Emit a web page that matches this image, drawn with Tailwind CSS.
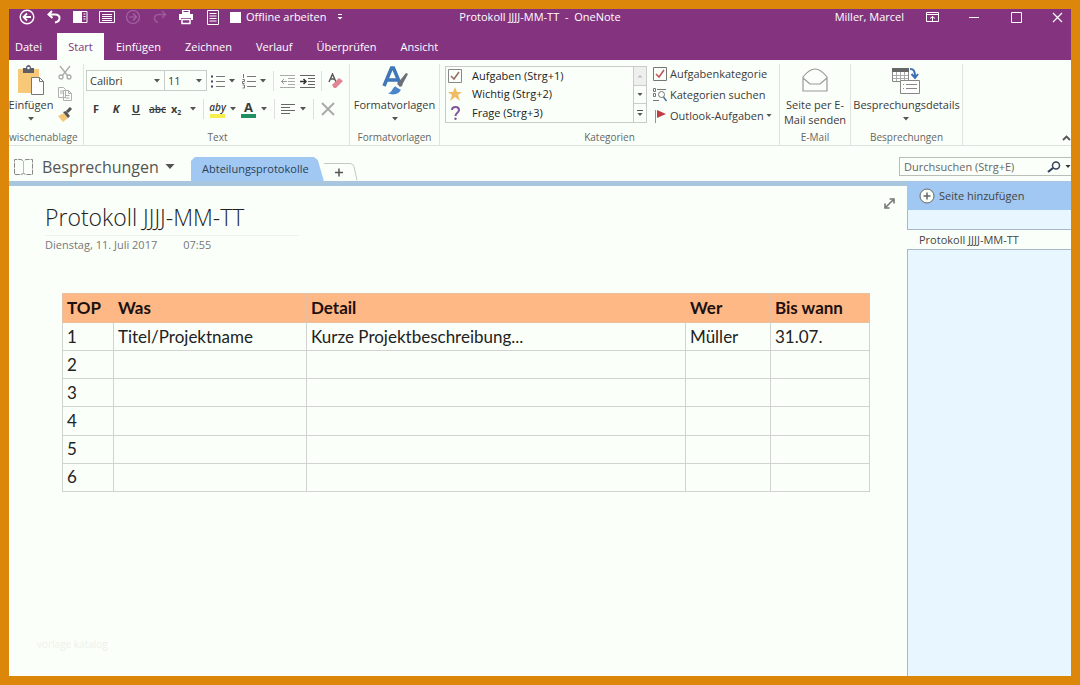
<!DOCTYPE html>
<html lang="de">
<head>
<meta charset="utf-8">
<meta name="viewport" content="width=device-width, initial-scale=1">
<title>Protokoll JJJJ-MM-TT - OneNote</title>
<script src="https://cdn.jsdelivr.net/npm/@tailwindcss/browser@4"></script>
</head>
<body class="flex min-h-screen flex-col border-9 border-[#dc860a] bg-[#fbfff9] font-['Open_Sans','Noto_Sans',sans-serif] text-[11px] leading-4 text-[#444]">

<header class="bg-[#84347f] text-white">
  <div class="grid h-4 grid-cols-[1fr_auto_1fr] items-center">
    <div class="flex h-4 items-center">
      <div class="ml-[5px] flex w-[212px]">
        <button aria-label="Zurück" class="flex flex-1 justify-center"><svg class="size-4" viewBox="0 0 16 16" fill="none" stroke="currentColor" stroke-width="1.4"><circle cx="8" cy="8" r="6.8"/><path d="M12 8H5M8 4.500 4.500 8 8 11.500" stroke-width="1.800"/></svg></button>
        <button aria-label="Rückgängig" class="flex flex-1 justify-center"><svg class="size-4" viewBox="0 0 16 16" fill="none" stroke="currentColor" stroke-width="2"><path d="M6 2 2.500 5.500 6.500 9M3 5.500h6c3 0 4.500 1.500 4.500 3.500S12 13 9 13.500"/></svg></button>
        <button aria-label="Seite andocken" class="flex flex-1 justify-center"><svg class="size-4" viewBox="0 0 16 16"><path d="M1 2h9v12H1z" fill="currentColor"/><path d="M10 2.500h5v11h-5M11.500 5h2M11.500 7.500h2M11.500 10h2" fill="none" stroke="currentColor"/></svg></button>
        <button aria-label="Ganzseitenansicht" class="flex flex-1 justify-center"><svg class="size-4" viewBox="0 0 16 16" fill="none" stroke="currentColor"><path d="M.500 2.500h15v11H.500zM3 5.500h10M3 7.500h10M3 9.500h10M3 11.500h10"/></svg></button>
        <button aria-label="Vorwärts" disabled class="flex flex-1 justify-center text-[#a565a1]"><svg class="size-4" viewBox="0 0 16 16" fill="none" stroke="currentColor" stroke-width="1.200"><circle cx="8" cy="8" r="6.500"/><path d="M4 8h7M8 4.500 11.500 8 8 11.500"/></svg></button>
        <button aria-label="Wiederholen" disabled class="flex flex-1 justify-center text-[#9b5897]"><svg class="size-4" viewBox="0 0 16 16" fill="none" stroke="currentColor" stroke-width="1.600"><path d="M10 2l3.500 3.500L10 9M13 5.500H7c-3 0-4.500 1.500-4.500 3.500S4 13 6 13.500"/></svg></button>
        <button aria-label="Drucken" class="flex flex-1 justify-center"><svg class="size-4" viewBox="0 0 16 16"><path d="M4 1h8v4H4zM1 5h14v6h-2V9H3v2H1z" fill="currentColor"/><path d="M4 10.500h8v4H4z" fill="none" stroke="currentColor" stroke-width="1.500"/><path d="M5.500 2.500h5" stroke="#84347f"/></svg></button>
        <button aria-label="Seitenvorlagen" class="flex flex-1 justify-center"><svg class="size-4" viewBox="0 0 16 16" fill="none" stroke="currentColor"><path d="M2.500 1.500h11v14h-11zM4.500 4.500h7M4.500 7h7M4.500 9.500h7M4.500 12h7"/></svg></button>
      </div>
      <button class="ml-1 flex items-center gap-[5px] whitespace-nowrap"><span class="size-[11px] bg-white"></span>Offline arbeiten</button>
      <button aria-label="Symbolleiste anpassen" class="ml-[10px]"><svg class="size-2" viewBox="0 0 8 8" fill="currentColor"><path d="M2 1h4v1H2zM1.500 4h5L4 6.500z"/></svg></button>
    </div>
    <h1 class="whitespace-pre">Protokoll JJJJ-MM-TT  -  OneNote</h1>
    <div class="flex items-center justify-end">
      <button class="mr-[22px]">Miller, Marcel</button>
      <button aria-label="Menüband-Anzeigeoptionen" class="mr-[30px]"><svg class="h-3 w-[13px]" viewBox="0 0 13 12" fill="none" stroke="currentColor"><path d="M.500 1.500h12v9H.500zM.500 3.500h12M6.500 10V5.500M4 7.500l2.500-2 2.500 2"/></svg></button>
      <button aria-label="Minimieren" class="mr-8"><svg class="h-3 w-[10px]" viewBox="0 0 10 12" stroke="currentColor"><path d="M0 6.500h10"/></svg></button>
      <button aria-label="Maximieren" class="mr-[30px]"><svg class="size-[11px]" viewBox="0 0 11 11" fill="none" stroke="currentColor"><path d="M.500.500h10v10H.500z"/></svg></button>
      <button aria-label="Schließen" class="mr-2"><svg class="size-[11px]" viewBox="0 0 11 11" stroke="currentColor" stroke-width="1.200"><path d="M1 1l9 9M10 1l-9 9"/></svg></button>
    </div>
  </div>
  <nav class="mt-2 flex h-[27px] items-stretch">
    <button class="w-12 pl-[6px] text-left">Datei</button>
    <button class="w-[47px] bg-[#fbfff9] text-[#84347f]">Start</button>
    <button class="px-3">Einfügen</button>
    <button class="px-3">Zeichnen</button>
    <button class="px-3">Verlauf</button>
    <button class="px-3">Überprüfen</button>
    <button class="px-3">Ansicht</button>
  </nav>
</header>

<section aria-label="Menüband" class="flex h-[86px] border-b border-[#dfe3df] text-[#3b3b3b]">
  <!-- Zwischenablage -->
  <div class="mt-1 flex w-[75px] flex-col justify-between overflow-hidden border-r border-[#e0e3e0]">
    <div class="flex">
      <button class="flex w-[44px] flex-col items-center"><svg class="h-8 w-7" viewBox="0 0 28 32"><path d="M1 5h21v24H1z" fill="#f6c878"/><path d="M6 4h3c0-4 5-4 5 0h3v5H6z" fill="#5d5d68"/><circle cx="11.500" cy="4" r="1.300" fill="#fff"/><path d="M14.500 13.500h8l4 4v13h-12z" fill="#fff" stroke="#777"/><path d="M22.500 13.500v4h4" fill="none" stroke="#777"/></svg><span class="mt-[1px]">Einfügen</span><svg class="mt-1 h-1 w-2" viewBox="0 0 8 4" fill="#555"><path d="M1 0h6L4 3.500z"/></svg></button>
      <div class="ml-1 flex flex-col items-center gap-[5px] pt-[1px]">
        <button aria-label="Ausschneiden"><svg class="size-4" viewBox="0 0 16 16" fill="none" stroke="#aaa" stroke-width="1.300"><path d="M3 1l7.500 9.500M13 1 5.500 10.500"/><circle cx="4" cy="12" r="2"/><circle cx="12" cy="12" r="2"/></svg></button>
        <button aria-label="Kopieren"><svg class="size-4" viewBox="0 0 16 16" fill="#fbfff9" stroke="#b0b0b0"><path d="M1.500 1.500h5l2 2v8h-7zM3 5h3M3 7h3M6.500 4.500h5l3 3v7h-8zM11.500 4.500v3h3M8.500 9.500h4M8.500 12h4"/></svg></button>
        <button aria-label="Format übertragen"><svg class="size-4" viewBox="0 0 16 16"><path d="M1 9l6-3 4 5-5 4z" fill="#f4c878"/><path d="M6 5l3-1 4 5-2 2z" fill="#555"/><path d="M10 5l4-4" stroke="#555" stroke-width="3"/></svg></button>
      </div>
    </div>
    <span class="whitespace-nowrap text-[10px] text-[#666]">wischenablage</span>
  </div>

  <!-- Text -->
  <div class="mt-1 flex w-[266px] flex-col justify-between border-r border-[#e0e3e0] pl-[2px]">
    <div>
      <div class="flex items-center pt-[6px]">
        <span class="relative flex w-[79px]"><select aria-label="Schriftart" class="h-[21px] w-full appearance-none border border-[#c9cdc9] pl-[3px]"><option>Calibri</option></select><svg class="pointer-events-none absolute top-[9px] right-1 h-1 w-2" viewBox="0 0 8 4" fill="#555"><path d="M1 0h6L4 3.500z"/></svg></span>
        <span class="relative flex w-[42px]"><select aria-label="Schriftgrad" class="h-[21px] w-full appearance-none border border-l-0 border-[#c9cdc9] pl-[3px]"><option>11</option></select><svg class="pointer-events-none absolute top-[9px] right-1 h-1 w-2" viewBox="0 0 8 4" fill="#555"><path d="M1 0h6L4 3.500z"/></svg></span>
        <button aria-label="Aufzählung" class="ml-1 flex items-center gap-[3px]"><svg class="h-4 w-[14px]" viewBox="0 0 14 16" stroke="#777"><path d="M5 3.500h9M5 8.500h9M5 13.500h9"/><path d="M0 3.500h2M0 8.500h2M0 13.500h2" stroke="#446" stroke-width="2"/></svg><svg class="h-1 w-2" viewBox="0 0 8 4" fill="#555"><path d="M1 0h6L4 3.500z"/></svg></button>
        <button aria-label="Nummerierung" class="ml-[6px] flex items-center gap-[3px]"><svg class="h-4 w-[14px]" viewBox="0 0 14 16" stroke="#777"><path d="M5 3.500h9M5 8.500h9M5 13.500h9M1.500 1v4M.500 6.500h2v2h-2v2h2M.500 12h2v3h-2" fill="none"/></svg><svg class="h-1 w-2" viewBox="0 0 8 4" fill="#555"><path d="M1 0h6L4 3.500z"/></svg></button>
        <span class="mx-[6px] h-5 w-px bg-[#dedede]"></span>
        <button aria-label="Einzug verkleinern"><svg class="h-4 w-[15px]" viewBox="0 0 15 16" fill="none" stroke="#aaa"><path d="M0 2.500h15M8 5.500h7M8 8.500h7M8 11.500h7M0 14.500h15"/><path d="M1 8.500h6M4 6 1.500 8.500 4 11" stroke="#999"/></svg></button>
        <button aria-label="Einzug vergrößern" class="ml-[5px]"><svg class="h-4 w-[15px]" viewBox="0 0 15 16" fill="none" stroke="#666"><path d="M0 2.500h15M8 5.500h7M8 8.500h7M8 11.500h7M0 14.500h15"/><path d="M0 8.500h6M3.500 6 6 8.500 3.500 11" stroke="#333" stroke-width="1.500"/></svg></button>
        <span class="mx-[6px] h-5 w-px bg-[#dedede]"></span>
        <button aria-label="Formatierung löschen"><svg class="h-4 w-[15px]" viewBox="0 0 15 16"><path d="M1 9 4.500 1 8 9M2.500 6h4" fill="none" stroke="#555" stroke-width="1.400"/><path d="M4 12l7-7 4 3-7 7H6z" fill="#e28492"/></svg></button>
      </div>
      <div class="flex items-center pt-2">
        <button aria-label="Fett" class="w-5 text-center font-bold">F</button>
        <button aria-label="Kursiv" class="w-5 text-center font-bold italic">K</button>
        <button aria-label="Unterstrichen" class="w-5 text-center font-bold underline">U</button>
        <button aria-label="Durchgestrichen" class="w-[23px] text-center text-[10px] font-semibold line-through">abc</button>
        <button aria-label="Tiefgestellt" class="flex w-7 items-center justify-between pl-[2px]"><span class="font-bold">x<sub class="text-[7px]">2</sub></span><svg class="h-1 w-2" viewBox="0 0 8 4" fill="#555"><path d="M1 0h6L4 3.500z"/></svg></button>
        <span class="mx-[6px] h-5 w-px bg-[#dedede]"></span>
        <button aria-label="Texthervorhebung" class="flex items-center gap-1"><span class="flex h-[18px] w-[15px] flex-col items-center justify-end border-b-4 border-[#f6ee4c] text-[10px] leading-[13px] font-semibold italic">aby</span><svg class="h-1 w-2" viewBox="0 0 8 4" fill="#555"><path d="M1 0h6L4 3.500z"/></svg></button>
        <button aria-label="Schriftfarbe" class="ml-1 flex items-center gap-1"><span class="flex h-[18px] w-[15px] flex-col items-center justify-end border-b-4 border-[#219060] text-[13px] leading-[13px] font-bold">A</span><svg class="h-1 w-2" viewBox="0 0 8 4" fill="#555"><path d="M1 0h6L4 3.500z"/></svg></button>
        <span class="mx-[6px] h-5 w-px bg-[#dedede]"></span>
        <button aria-label="Ausrichtung" class="flex items-center gap-1"><svg class="h-4 w-[14px]" viewBox="0 0 14 16" stroke="#666"><path d="M0 3.500h14M0 6.500h9M0 9.500h14M0 12.500h9"/></svg><svg class="h-1 w-2" viewBox="0 0 8 4" fill="#555"><path d="M1 0h6L4 3.500z"/></svg></button>
        <span class="mx-[6px] h-5 w-px bg-[#dedede]"></span>
        <button aria-label="Löschen"><svg class="size-4" viewBox="0 0 16 16" stroke="#aaa" stroke-width="2"><path d="M2 2l12 12M14 2 2 14"/></svg></button>
      </div>
    </div>
    <span class="text-center text-[10px] text-[#666]">Text</span>
  </div>

  <!-- Formatvorlagen -->
  <div class="mt-1 flex w-[90px] flex-col items-center justify-between border-r border-[#e0e3e0]">
    <button class="flex flex-col items-center"><svg class="h-8 w-7" viewBox="0 0 28 32"><path d="M3 22 10.500 4h2L20 22M5.500 16h12" fill="none" stroke="#3f77b8" stroke-width="3.500"/><path d="M16 20 25 9l2 1-7 13z" fill="#6b7078"/><path d="M7 29c5 0 3-6 9-7l4 3c-1 5-8 7-13 4z" fill="#4a86cc"/><path d="M15 22l5 3" stroke="#fff" stroke-width="1.500"/></svg><span class="mt-[1px]">Formatvorlagen</span><svg class="mt-1 h-1 w-2" viewBox="0 0 8 4" fill="#555"><path d="M1 0h6L4 3.500z"/></svg></button>
    <span class="text-[10px] text-[#666]">Formatvorlagen</span>
  </div>

  <!-- Kategorien -->
  <div class="mt-1 flex w-[340px] flex-col justify-between border-r border-[#e0e3e0]">
    <div class="flex pt-[2px] pl-[5px]">
      <div class="flex h-[57px] w-[202px] border border-[#c9cdc9]">
        <div class="flex flex-1 flex-col justify-around text-[#222]">
          <button class="flex items-center gap-[10px] pl-[2px]"><svg class="size-[14px]" viewBox="0 0 14 14" fill="none" stroke="#888"><path d="M.500.500h13v13H.500z"/><path d="M3 7l3 3 5-7" stroke="#9a6a62" stroke-width="1.500"/></svg>Aufgaben (Strg+1)</button>
          <button class="flex items-center gap-[10px] pl-[2px]"><svg class="size-[14px]" viewBox="0 0 14 14"><path d="M7 0l2 5h5l-4 3 2 6-5-4-5 4 2-6-4-3h5z" fill="#eebc62"/></svg>Wichtig (Strg+2)</button>
          <button class="flex items-center gap-[10px] pl-[2px]"><svg class="size-[14px]" viewBox="0 0 14 14"><path d="M4 4c0-4 7-4 7 0 0 3-3.500 2.500-3.500 6" fill="none" stroke="#82559c" stroke-width="2"/><circle cx="7.500" cy="12.800" r="1.200" fill="#82559c"/></svg>Frage (Strg+3)</button>
        </div>
        <div class="flex w-[13px] flex-col divide-y divide-[#c9cdc9] border-l border-[#c9cdc9]">
          <button aria-label="Nach oben" class="flex flex-1 items-center justify-center bg-[#eef0ee]"><svg class="h-1 w-2" viewBox="0 0 8 4" fill="#bbb"><path d="M1.500 3.500h5L4 1z"/></svg></button>
          <button aria-label="Nach unten" class="flex flex-1 items-center justify-center"><svg class="h-1 w-2" viewBox="0 0 8 4" fill="#555"><path d="M1.500 0h5L4 3z"/></svg></button>
          <button aria-label="Mehr" class="flex flex-1 items-center justify-center"><svg class="size-2" viewBox="0 0 8 8" fill="#555"><path d="M1 1h6v1H1zM1.500 4h5L4 7z"/></svg></button>
        </div>
      </div>
      <div class="ml-[6px] flex flex-col gap-[5px]">
        <button class="flex items-center gap-[3px]"><svg class="size-[14px]" viewBox="0 0 14 14" fill="none" stroke="#777"><path d="M.500.500h13v13H.500z"/><path d="M3 7l3 3 5-7" stroke="#c05258" stroke-width="1.500"/></svg>Aufgabenkategorie</button>
        <button class="flex items-center gap-[3px]"><svg class="size-[14px]" viewBox="0 0 14 14" fill="none" stroke="#777"><path d="M.500.500h2v3h-2zM.500 5.500h2v3h-2zM4 1.500h9M0 12.500h6"/><circle cx="8.500" cy="6.500" r="3"/><path d="M10.500 9l3 4" stroke="#4a6fa0" stroke-width="1.500"/></svg>Kategorien suchen</button>
        <button class="flex items-center gap-[3px]"><svg class="size-[14px]" viewBox="0 0 14 14"><path d="M2.500 1v13" stroke="#c08080"/><path d="M4 1l9 4-9 4z" fill="#c43c42"/></svg>Outlook-Aufgaben<svg class="-ml-[2px] h-1 w-2" viewBox="0 0 8 4" fill="#555"><path d="M1.500 0h5L4 3z"/></svg></button>
      </div>
    </div>
    <span class="text-center text-[10px] text-[#666]">Kategorien</span>
  </div>

  <!-- E-Mail -->
  <div class="mt-1 flex w-[71px] flex-col items-center justify-between border-r border-[#e0e3e0]">
    <button class="flex flex-col items-center leading-[15px]"><svg class="h-8 w-7" viewBox="0 0 28 32" fill="none" stroke="#999" stroke-width="1.200"><path d="M2 13C6 8 11 5 14 5s8 3 12 8v14H2zM2 14l7 6h10l7-6"/></svg><span class="mt-[1px]">Seite per E-<br>Mail senden</span></button>
    <span class="text-[10px] text-[#666]">E-Mail</span>
  </div>

  <!-- Besprechungen -->
  <div class="mt-1 flex w-[112px] flex-col items-center justify-between border-r border-[#e0e3e0]">
    <button class="flex flex-col items-center"><svg class="h-8 w-7" viewBox="0 0 28 32"><path d="M.500 4.500h16v13H.500z" fill="#fff" stroke="#888"/><path d="M0 4h17v4H0z" fill="#666"/><path d="M4.500 8v9M8.500 8v9M12.500 8v9M1 11.500h15M1 14.500h15" stroke="#aaa"/><path d="M8.500 16.500h19v13h-19z" fill="#fff" stroke="#888"/><path d="M11 20.500h1M14 20.500h11M11 24.500h1M14 24.500h11" stroke="#888"/><path d="M18 5c4 0 5 2 5 8M19.500 10l3.500 4 3-4" fill="none" stroke="#3f6fb5" stroke-width="2"/></svg><span class="mt-[1px]">Besprechungsdetails</span><svg class="mt-1 h-1 w-2" viewBox="0 0 8 4" fill="#555"><path d="M1 0h6L4 3.500z"/></svg></button>
    <span class="text-[10px] text-[#666]">Besprechungen</span>
  </div>
  <button aria-label="Menüband reduzieren" class="mt-auto mb-1 ml-auto"><svg class="h-[6px] w-[9px]" viewBox="0 0 9 6" fill="none" stroke="#555" stroke-width="1.800"><path d="M1 5l3.500-3.500L8 5"/></svg></button>
</section>

<div class="flex h-[35px] items-end">
  <button class="mb-[2px] ml-1 flex items-center text-[16px] leading-6 text-[#555]"><svg class="mr-2 h-[18px] w-[21px]" viewBox="0 0 21 18" fill="none" stroke="#888"><path d="M10.500 3v12" stroke="#bbb"/><path d="M10 2.500 8 1.500H1.500v15H8l2.500-1 2.500 1h6.500v-15H13l-2 1" stroke-dasharray="5 1"/></svg>Besprechungen<svg class="ml-[6px] h-[6px] w-[10px]" viewBox="0 0 10 6" fill="#555"><path d="M.500 0h9L5 5z"/></svg></button>
  <button class="ml-4 h-6 w-[133px] bg-[#a0c8f2] pr-1 text-[#2d3f55] [clip-path:polygon(0_4px,4px_0,123px_0,127px_3px,133px_100%,0_100%)]">Abteilungsprotokolle</button>
  <button aria-label="Neuen Abschnitt erstellen" class="flex h-[18px] w-[34px] items-center justify-center"><svg class="h-[18px] w-[34px]" viewBox="0 0 34 18" fill="none" stroke="#c4c8c4"><path d="M0 .500h26q3 0 4 3l3 14"/><path d="M11 9.500h8M15 5.500v8" stroke="#555" stroke-width="1.500"/></svg></button>
  <form class="mb-[5px] ml-auto flex h-[19px] w-[172px] items-center border border-r-0 border-[#b9beb9]">
    <input type="search" aria-label="Durchsuchen" placeholder="Durchsuchen (Strg+E)" class="w-full min-w-0 flex-1 pl-1 outline-none placeholder:text-[#666]">
    <button type="button" aria-label="Suchen"><svg class="h-3 w-[14px]" viewBox="0 0 14 12" fill="none" stroke="#34405c"><circle cx="9" cy="4.500" r="3.500" stroke-width="1.500"/><path d="M6 7l-5 4" stroke-width="2.200"/></svg></button>
    <button type="button" aria-label="Suchbereich" class="ml-1 flex h-4 items-center"><svg class="h-1 w-[6px]" viewBox="0 0 6 4" fill="#333"><path d="M.500 0h5L3 3z"/></svg></button>
  </form>
</div>

<div class="flex flex-1 flex-col border-t-[5px] border-[#a9c6df]">
  <div class="flex flex-1">
    <main class="flex min-w-0 flex-1 flex-col">
      <div class="flex items-start justify-between pr-3 pl-9">
        <div>
          <h2 class="mt-4 w-[254px] border-b border-[#eef2ec] pb-[3px] text-[23px] leading-[30px] font-light text-[#222]">Protokoll JJJJ-MM-TT</h2>
          <p class="flex gap-[26px] pt-[1px] text-[#777]"><span>Dienstag, 11. Juli 2017</span><span>07:55</span></p>
        </div>
        <button aria-label="Ganzseitenansicht" class="mt-3"><svg class="size-[11px]" viewBox="0 0 11 11" fill="none" stroke="#777" stroke-width="1.600"><path d="M2 9l7-7M5.500 1H10v4.500M1 5.500V10h4.500"/></svg></button>
      </div>
      <table class="mt-10 ml-[53px] h-[199px] w-[807px] table-fixed border-collapse text-left font-['Lato',sans-serif] text-[17px] leading-5 text-[#222] [&_td]:h-7 [&_td]:border [&_td]:border-[#d0d3d0] [&_td]:px-1 [&_th]:h-[29px] [&_th]:border [&_th]:border-[#e6c0a0] [&_th]:px-1">
        <colgroup><col class="w-[51px]"><col class="w-[193px]"><col class="w-[379px]"><col class="w-[85px]"><col class="w-[99px]"></colgroup>
        <thead><tr class="bg-[#fdb885] text-[#1c1010]"><th>TOP</th><th>Was</th><th>Detail</th><th>Wer</th><th>Bis wann</th></tr></thead>
        <tbody>
          <tr><td>1</td><td>Titel/Projektname</td><td>Kurze Projektbeschreibung...</td><td>Müller</td><td>31.07.</td></tr>
          <tr><td>2</td><td></td><td></td><td></td><td></td></tr>
          <tr><td>3</td><td></td><td></td><td></td><td></td></tr>
          <tr><td>4</td><td></td><td></td><td></td><td></td></tr>
          <tr><td>5</td><td></td><td></td><td></td><td></td></tr>
          <tr><td>6</td><td></td><td></td><td></td><td></td></tr>
        </tbody>
      </table>
      <p class="mt-auto mb-6 ml-7 text-[10px] text-[#edf1eb]">vorlage katalog</p>
    </main>
    <aside class="-mt-1 flex w-[164px] flex-col">
      <button class="flex h-[28px] items-center gap-1 border-l border-[#a9c6df] bg-[#a0c8f2] pl-[11px] text-[#444]"><svg class="size-4" viewBox="0 0 16 16" fill="#fbfff9" stroke="#666"><circle cx="8" cy="8" r="7"/><path d="M4.500 8h7M8 4.500v7" stroke-width="1.500"/></svg>Seite hinzufügen</button>
      <div class="h-[19px] border-l border-[#a8b8c4] bg-[#e8f6ff]"></div>
      <a href="#" class="flex h-[21px] items-center border-y border-[#a8b8c4] bg-[#fbfff9] pl-3">Protokoll JJJJ-MM-TT</a>
      <div class="flex-1 border-l border-[#a8b8c4] bg-[#e8f6ff]"></div>
    </aside>
  </div>
</div>
</body>
</html>
